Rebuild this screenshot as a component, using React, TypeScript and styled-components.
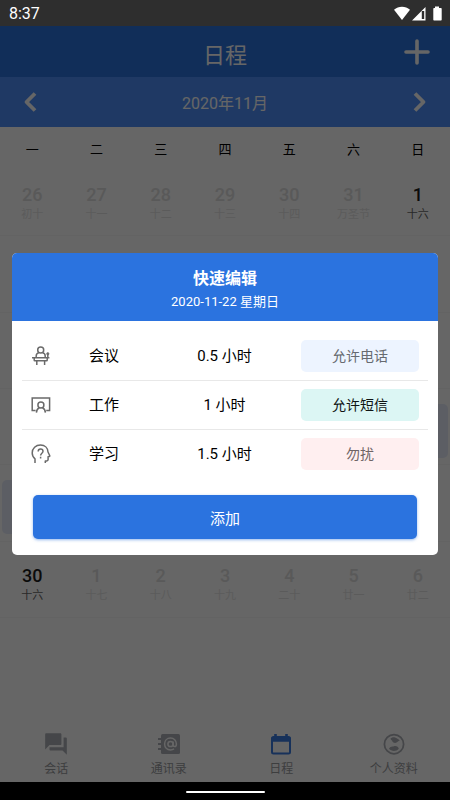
import React from "react";
import styled, { createGlobalStyle } from "styled-components";

const GlobalStyle = createGlobalStyle`
  *, *::before, *::after { box-sizing: border-box; }
  body {
    margin: 0;
    background: #fff;
    font-family: Roboto, "Noto Sans CJK SC", sans-serif;
    color: #000;
  }
  button { font: inherit; color: inherit; background: none; border: 0; padding: 0; cursor: pointer; }
  a { color: inherit; text-decoration: none; }
  h1, h2, p, ul { margin: 0; padding: 0; font-weight: 400; }
  ul { list-style: none; }
  svg { display: block; }
`;

const Phone = styled.div`
  min-height: 100vh;
  display: flex;
  flex-direction: column;
`;

const StatusBar = styled.header`
  display: flex;
  align-items: center;
  justify-content: space-between;
  height: 26px;
  padding: 1px 8px 0 9px;
  background: #2e2e2e;
  color: #fff;
  font-size: 16px;
`;

const StatusIcons = styled.div`
  display: flex;
  align-items: center;
`;

const Screen = styled.div`
  position: relative;
  flex: 1;
  display: flex;
  flex-direction: column;
`;

const TitleBar = styled.div`
  display: grid;
  grid-template-columns: 66px 1fr 66px;
  align-items: center;
  height: 51px;
  padding-top: 8px;
  background: #2b73df;
  color: #fff;
`;

const PageTitle = styled.h1`
  grid-column: 2;
  text-align: center;
  font-size: 22px;
  line-height: 28px;
`;

const IconButton = styled.button`
  display: flex;
  justify-content: center;
  align-items: center;
  height: 40px;
`;

const AddButton = styled(IconButton)`
  padding-bottom: 8px;
`;

const MonthBar = styled.div`
  display: grid;
  grid-template-columns: 60px 1fr 60px;
  align-items: center;
  height: 50px;
  background: #4e90fb;
  color: #fff;
  font-size: 16px;
  text-align: center;
`;

const WeekHeader = styled.div`
  display: grid;
  grid-template-columns: repeat(7, 1fr);
  padding: 13px 0 0;
  font-size: 13px;
  line-height: 20px;
  text-align: center;
`;

const MonthGrid = styled.div`
  display: grid;
  grid-template-rows: repeat(6, 1fr);
  height: 458px;
`;

const Week = styled.div`
  display: grid;
  grid-template-columns: repeat(7, 1fr);
  align-items: center;
  padding: 8px 0 0;
  border-bottom: 1px solid #f7f7f7;
`;

const Day = styled.button<{ $outside: boolean; $marked: boolean }>`
  display: flex;
  flex-direction: column;
  align-items: center;
  height: 54px;
  margin: 0 2px;
  padding-top: 10px;
  border-radius: 5px;
  background: ${(p) => (p.$marked ? "#e6ecfa" : "transparent")};
  color: ${(p) => (p.$outside ? "#dedede" : "#1c1c1c")};
`;

const DayNumber = styled.span`
  font-size: 18px;
  font-weight: 500;
  line-height: 20px;
`;

const Lunar = styled.span<{ $outside: boolean }>`
  font-size: 11px;
  line-height: 20px;
  color: ${(p) => (p.$outside ? "#e4e4e4" : "#666")};
`;

const TabBar = styled.nav`
  display: grid;
  grid-template-columns: repeat(4, 1fr);
  margin-top: auto;
  padding-bottom: 4px;
`;

const Tab = styled.a`
  display: flex;
  flex-direction: column;
  align-items: center;
  gap: 3px;
  font-size: 12px;
  line-height: 18px;
  color: #999b9e;
`;

const TabIcon = styled.span<{ $active: boolean }>`
  color: ${(p) => (p.$active ? "#3a7be0" : "#adb0b6")};
`;

const Backdrop = styled.div`
  position: absolute;
  inset: 0;
  display: flex;
  align-items: center;
  padding: 0 12px;
  background: rgba(0, 0, 0, 0.6);
`;

const Dialog = styled.section`
  flex: 1;
  overflow: hidden;
  border-radius: 5px;
  background: #fff;
`;

const DialogHeader = styled.div`
  padding: 14px 0 8px;
  background: #2b73df;
  color: #fff;
  text-align: center;
`;

const DialogTitle = styled.h2`
  font-size: 16px;
  font-weight: 700;
  line-height: 24px;
`;

const DialogDate = styled.p`
  font-size: 13px;
  line-height: 22px;
`;

const EventList = styled.ul`
  padding: 10px 10px 0;
`;

const EventRow = styled.li`
  display: grid;
  grid-template-columns: 38px 88px 1fr 118px;
  align-items: center;
  height: 49px;
  padding-right: 9px;
  font-size: 15px;
  line-height: 20px;
  text-align: center;
  & + & { border-top: 1px solid #e8e8e8; }
`;

const EventIcon = styled.span`
  display: flex;
  justify-content: center;
  color: #6a6a6a;
`;

const Tag = styled.span<{ $bg: string; $ink: string }>`
  height: 32px;
  border-radius: 5px;
  background: ${(p) => p.$bg};
  color: ${(p) => p.$ink};
  font-size: 14px;
  line-height: 32px;
`;

const DialogFooter = styled.div`
  padding: 17px 21px 16px;
`;

const SubmitButton = styled.button`
  width: 100%;
  height: 44px;
  border-radius: 5px;
  background: #2b73df;
  box-shadow: 0 1px 3px rgba(43, 115, 223, 0.5);
  color: #fff;
  font-size: 15px;
`;

const HomeArea = styled.footer`
  display: flex;
  justify-content: center;
  align-items: center;
  height: 18px;
  padding-top: 2px;
  background: #000;
`;

const HomeBar = styled.div`
  width: 79px;
  height: 2px;
  border-radius: 1px;
  background: #fff;
`;

const Chevron = ({ d }: { d: string }) => (
  <svg width="20" height="22" viewBox="0 0 20 22" fill="none" stroke="currentColor" strokeWidth="3.8" strokeLinejoin="round">
    <path d={d} />
  </svg>
);

const PodiumIcon = () => (
  <svg width="20" height="20" viewBox="0 0 20 20" fill="none" stroke="currentColor" strokeWidth="1.5">
    <circle cx="9.7" cy="4" r="3" />
    <path d="M5.200 11.400V10c0-1.700 1-2.800 2.600-3.200M11.600 6.800c1.600.4 2.600 1.500 2.600 3.200v1.400M1 11.800h17.400M3.200 12v2.200c0 .4.2.6.6.6h11.800c.4 0 .6-.2.6-.6V12M5.800 15v4M13.600 15v4M16.800 11.600V8" />
    <circle cx="16.8" cy="7.8" r="1.2" fill="currentColor" strokeWidth="0.6" />
  </svg>
);

const BoardIcon = () => (
  <svg width="20" height="20" viewBox="0 0 20 20" fill="none" stroke="currentColor" strokeWidth="1.5">
    <path d="M4.600 15.600H1.200V3h17.400v12.600h-3.400" />
    <circle cx="9.9" cy="10" r="3" />
    <path d="M5.400 17.600c.2-2.600 1.200-4.200 3-4.900M11.400 12.700c1.800.7 2.800 2.300 3 4.900" />
  </svg>
);

const ThinkIcon = () => (
  <svg width="20" height="20" viewBox="0 0 20 20" fill="none" stroke="currentColor" strokeWidth="1.5" strokeLinejoin="round">
    <path d="M4 19v-4.200C2.200 13.300 1.200 11.300 1.200 8.900 1.200 4.200 4.800 1 9.500 1c4.400 0 7.300 2.900 7.500 7l1.700 3.500c.2.500 0 .8-.4.900l-1.200.4v2.800c0 .9-.6 1.400-1.400 1.400h-1.400V19" />
    <path d="M7.200 7.500c0-1.500 1-2.400 2.400-2.400s2.400.9 2.400 2.200c0 1.900-2.400 2-2.400 4.200M9.600 12.800v1.600" />
  </svg>
);

const ForumIcon = () => (
  <svg width="26" height="26" viewBox="0 0 24 24" fill="currentColor">
    <path d="M21 6h-2v9H6v2c0 .55.45 1 1 1h11l4 4V7c0-.55-.45-1-1-1zm-4 6V3c0-.55-.45-1-1-1H3c-.55 0-1 .45-1 1v14l4-4h10c.55 0 1-.45 1-1z" />
  </svg>
);

const ContactsIcon = () => (
  <svg width="26" height="26" viewBox="0 0 26 26" fill="none" stroke="currentColor">
    <rect x="5" y="3" width="19" height="20" rx="1.5" fill="currentColor" stroke="none" />
    <path d="M2 8h4M2 13h4M2 18h4" strokeWidth="1.8" />
    <g stroke="#fff" strokeWidth="1.5">
      <circle cx="14.5" cy="13" r="2.6" />
      <path d="M17.100 10.400v3.400c0 1.200.7 1.800 1.600 1.800 1.100 0 1.700-1 1.700-2.600 0-3.400-2.500-5.900-5.900-5.900S8.600 9.600 8.600 13s2.500 5.900 5.900 5.900c1.400 0 2.500-.3 3.500-1" />
    </g>
  </svg>
);

const CalendarIcon = () => (
  <svg width="26" height="26" viewBox="0 0 26 26" fill="none" stroke="currentColor" strokeWidth="2">
    <rect x="4" y="6" width="18" height="16.5" rx="1.5" />
    <path d="M3.500 8.500h19" strokeWidth="4.5" />
    <path d="M7.500 3v4M18.500 3v4" strokeWidth="2.6" />
  </svg>
);

const ProfileIcon = () => (
  <svg width="26" height="26" viewBox="0 0 26 26">
    <circle cx="13" cy="13.2" r="9.6" fill="none" stroke="currentColor" strokeWidth="1.8" />
    <path d="M9.500 7.600c1.300-1.200 2.800-1.500 4.500-1.200 1.700.4 3.300 1.600 4.800 3.100-1.800.4-2.400 2.400-4.600 2.500-1.700 0-2.800-1-3.200-2.500-.6-.2-1.300-.8-1.500-1.900z" fill="currentColor" />
    <path d="M8 17.800c.8-1.400 2-2.100 3.500-2.200 1.200-.1 1.700-.6 2.800-.6 1.800 0 3 1.100 3.500 2.700-1.300 1.500-3 2.200-4.900 2.200s-3.600-.7-4.900-2.100z" fill="currentColor" />
  </svg>
);

const weekdays = ["一", "二", "三", "四", "五", "六", "日"];

const lunarDays = (
  "初十 十一 十二 十三 十四 万圣节 十六 " +
  "十七 十八 十九 二十 廿一 廿二 廿三 " +
  "廿四 廿五 廿六 廿七 廿八 廿九 初一 " +
  "初二 初三 初四 初五 初六 初七 初八 " +
  "初九 初十 十一 十二 十三 十四 十五 " +
  "十六 十七 十八 十九 二十 廿一 廿二"
).split(" ");

const days = lunarDays.map((lunar, i) => {
  const date = new Date(2020, 9, 26 + i);
  const outside = date.getMonth() !== 10;
  const number = date.getDate();
  return { lunar, number, outside, marked: !outside && (number === 22 || number === 23) };
});

const weeks = [0, 1, 2, 3, 4, 5].map((w) => days.slice(w * 7, w * 7 + 7));

const events = [
  { name: "会议", duration: "0.5 小时", tag: "允许电话", bg: "#edf4ff", ink: "#666a70", Icon: PodiumIcon },
  { name: "工作", duration: "1 小时", tag: "允许短信", bg: "#dcf6f4", ink: "#101414", Icon: BoardIcon },
  { name: "学习", duration: "1.5 小时", tag: "勿扰", bg: "#ffeff0", ink: "#706465", Icon: ThinkIcon },
];

const tabs = [
  { label: "会话", Icon: ForumIcon, active: false },
  { label: "通讯录", Icon: ContactsIcon, active: false },
  { label: "日程", Icon: CalendarIcon, active: true },
  { label: "个人资料", Icon: ProfileIcon, active: false },
];

export default function App() {
  return (
    <Phone>
      <GlobalStyle />
      <StatusBar>
        <span>8:37</span>
        <StatusIcons>
          <svg width="48" height="16" viewBox="0 0 48 16" fill="#fff" aria-hidden="true">
            <path d="M0 3.700C2.300 1.700 5 .7 8 .7s5.700 1 8 3L8 14.100z" />
            <path fillRule="evenodd" d="M31.500 1V14.500H18zM30.200 5h-2.400v8h2.400z" />
            <path d="M41 .5h4V2h2c.4 0 .7.300.7.700v11.100c0 .4-.3.700-.7.700h-7c-.4 0-.7-.3-.7-.7V2.700c0-.4.3-.7.7-.7h1z" />
          </svg>
        </StatusIcons>
      </StatusBar>

      <Screen>
        <TitleBar>
          <PageTitle>日程</PageTitle>
          <AddButton aria-label="添加日程">
            <svg width="26" height="26" viewBox="0 0 26 26" stroke="currentColor" strokeWidth="3.6" strokeLinecap="round">
              <path d="M13 2v22M2 13h22" />
            </svg>
          </AddButton>
        </TitleBar>
        <MonthBar>
          <IconButton aria-label="上个月"><Chevron d="M15 2.500L6.500 11l8.500 8.500" /></IconButton>
          <span>2020年11月</span>
          <IconButton aria-label="下个月"><Chevron d="M5 2.500l8.500 8.500L5 19.500" /></IconButton>
        </MonthBar>

        <WeekHeader>
          {weekdays.map((d) => <span key={d}>{d}</span>)}
        </WeekHeader>
        <MonthGrid>
          {weeks.map((week, w) => (
            <Week key={w}>
              {week.map((d) => (
                <Day key={d.number} $outside={d.outside} $marked={d.marked}>
                  <DayNumber>{d.number}</DayNumber>
                  <Lunar $outside={d.outside}>{d.lunar}</Lunar>
                </Day>
              ))}
            </Week>
          ))}
        </MonthGrid>

        <TabBar>
          {tabs.map(({ label, Icon, active }) => (
            <Tab key={label} href="#" aria-current={active ? "page" : undefined}>
              <TabIcon $active={active}><Icon /></TabIcon>
              <span>{label}</span>
            </Tab>
          ))}
        </TabBar>

        <Backdrop>
          <Dialog role="dialog" aria-modal="true" aria-labelledby="quick-edit-title">
            <DialogHeader>
              <DialogTitle id="quick-edit-title">快速编辑</DialogTitle>
              <DialogDate>2020-11-22 星期日</DialogDate>
            </DialogHeader>
            <EventList>
              {events.map(({ name, duration, tag, bg, ink, Icon }) => (
                <EventRow key={name}>
                  <EventIcon><Icon /></EventIcon>
                  <span>{name}</span>
                  <span>{duration}</span>
                  <Tag $bg={bg} $ink={ink}>{tag}</Tag>
                </EventRow>
              ))}
            </EventList>
            <DialogFooter>
              <SubmitButton>添加</SubmitButton>
            </DialogFooter>
          </Dialog>
        </Backdrop>
      </Screen>

      <HomeArea><HomeBar /></HomeArea>
    </Phone>
  );
}
